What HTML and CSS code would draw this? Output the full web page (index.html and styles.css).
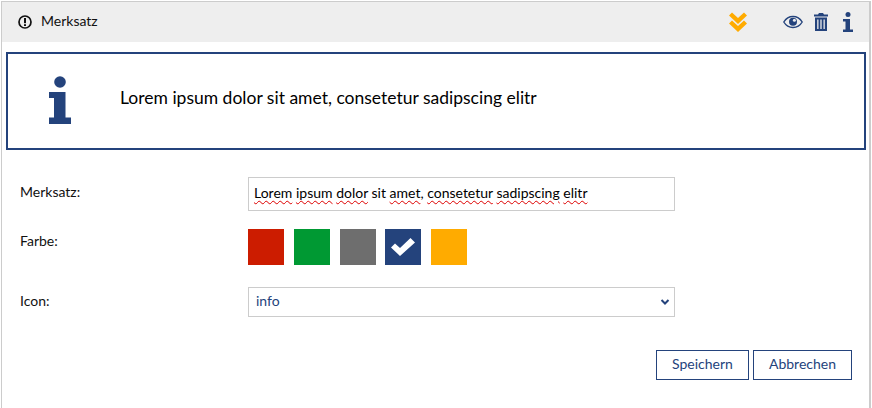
FILE: index.html
```html
<!DOCTYPE html>
<html lang="de">
<head>
<meta charset="utf-8">
<title>Merksatz</title>
<link rel="stylesheet" href="styles.css">
</head>
<body>
<div class="panel">
  <header class="head">
    <svg class="alert" viewBox="0 0 14 14" width="14" height="14"><circle cx="7" cy="7" r="6" fill="none" stroke="#111" stroke-width="1.700"/><rect x="6" y="3" width="2" height="5.200" fill="#111"/><rect x="6" y="9.200" width="2" height="1.800" fill="#111"/></svg>
    <span class="head-title">Merksatz</span>
    <svg class="chev" viewBox="0 0 18 20" width="18" height="20"><path d="M0 3.500 3 .5 9 6 15 .5 18 3.500 9 12Z M0 11.500 3 8.500 9 14 15 8.500 18 11.500 9 20Z" fill="#ffab00"/></svg>
    <svg class="eye" viewBox="0 0 20 14" width="20" height="14"><path d="M.8 7C3 3.300 6.200 1.500 10 1.500S17 3.300 19.200 7C17 10.700 13.800 12.500 10 12.500S3 10.700 .8 7Z" fill="none" stroke="#24437c" stroke-width="1.400"/><circle cx="10" cy="6.800" r="4" fill="#24437c"/><circle cx="11.400" cy="5.300" r="1.500" fill="#eee"/></svg>
    <svg class="trash" viewBox="0 0 14 18" width="14" height="18"><path d="M5 0h4l1 1.500h4V3.500H0V1.500h4Z" fill="#24437c"/><path d="M1 4.500h12V18H1Z M3.200 6.500v9.500h1.300V6.500Z M6.350 6.500v9.500h1.300V6.500Z M9.500 6.500v9.500h1.300V6.500Z" fill="#24437c" fill-rule="evenodd"/></svg>
    <svg class="info-small" viewBox="0 0 10 20" width="10" height="20"><circle cx="5" cy="2.500" r="2.500" fill="#24437c"/><path d="M0 7h7v10.500h3V20H0v-2.500h2.500V9.500H0Z" fill="#24437c"/></svg>
  </header>
  <section class="notice">
    <svg class="info-big" viewBox="0 0 22 49" width="22" height="49"><circle cx="11" cy="6" r="5.800" fill="#24437c"/><path d="M0 16h16.500v25.500H22V48H0v-6.500h5V22H0Z" fill="#24437c"/></svg>
    <p class="notice-text">Lorem ipsum dolor sit amet, consetetur sadipscing elitr</p>
  </section>
  <form class="form">
    <div class="row row-text">
      <span class="label">Merksatz:</span>
      <div class="field text-field"><span class="sp">Lorem</span> <span class="sp">ipsum</span> <span class="sp">dolor</span> sit <span class="sp">amet</span>, <span class="sp">consetetur</span> <span class="sp">sadipscing</span> <span class="sp">elitr</span></div>
    </div>
    <div class="row row-color">
      <span class="label">Farbe:</span>
      <div class="swatches">
        <span class="swatch red"></span>
        <span class="swatch green"></span>
        <span class="swatch gray"></span>
        <span class="swatch navy"><svg viewBox="0 0 24 18" width="24" height="18"><path d="M0 9.500 4 5.500 9 10 19.500 0 24 4.500 9 18Z" fill="#fff"/></svg></span>
        <span class="swatch amber"></span>
      </div>
    </div>
    <div class="row row-icon">
      <span class="label">Icon:</span>
      <div class="field select-field"><span>info</span><svg viewBox="0 0 10 7" width="10" height="7"><path d="M1.500 1 5 4.500 8.500 1" fill="none" stroke="#24437c" stroke-width="2"/></svg></div>
    </div>
    <div class="actions">
      <button type="button" class="btn btn-save">Speichern</button>
      <button type="button" class="btn btn-cancel">Abbrechen</button>
    </div>
  </form>
</div>
</body>
</html>
```
FILE: styles.css
```css
* { box-sizing: border-box; }
html, body { margin: 0; padding: 0; background: #fff; }
body {
  font-family: Lato, "Liberation Sans", sans-serif;
  font-size: 14px;
  color: #111;
  width: 872px;
  height: 408px;
  overflow: hidden;
  padding: 1px 0 0 1px;
}
.panel {
  width: 870px;
  height: 407px;
  border: 1px solid #ccc;
  border-width: 1px 2px 0 1px;
  background: #fff;
}
.head {
  height: 40px;
  background: #eee;
  display: flex;
  align-items: center;
  padding: 0 16px 0 16px;
}
.head-title { margin: 0 0 4px 9px; flex: 1; }
.chev { margin-right: 36px; }
.eye { margin-right: 11px; }
.trash { margin-right: 15px; }
.notice {
  margin: 10px 3px 0 4px;
  height: 98px;
  border: 2px solid #24437c;
  display: flex;
  align-items: center;
  padding: 0 0 0 41px;
}
.info-big { flex: none; margin-bottom: 1px; }
.notice-text {
  margin: 0 0 8px 49px;
  font-size: 17.5px;
  color: #000;
}
.form { padding: 27px 17px 0 18px; }
.row { display: flex; }
.label { width: 228px; flex: none; }
.row-text { height: 34px; }
.row-text .label { line-height: 30px; }
.row-color { margin-top: 18px; height: 37px; }
.row-color .label { padding-top: 3px; }
.row-icon { margin-top: 21px; height: 30px; }
.row-icon .label { line-height: 28px; }
.field {
  width: 427px;
  border: 1px solid #ccc;
  display: flex;
  align-items: center;
  white-space: pre;
}
.text-field {
  display: block;
  height: 34px;
  line-height: 30px;
  padding-left: 5px;
  color: #000;
}
.sp { text-decoration: underline wavy #d00 1px; text-underline-offset: 2px; }
.select-field {
  height: 30px;
  padding: 0 4px 3px 7px;
  color: #24437c;
  justify-content: space-between;
}
.select-field svg { margin-top: 3px; }
.swatches { display: flex; gap: 10px; }
.swatch {
  width: 36px;
  height: 36px;
  display: flex;
  align-items: center;
  justify-content: center;
}
.red { background: #cc1c00; }
.green { background: #009933; }
.gray { background: #6e6e6e; }
.navy { background: #24437c; margin-left: -1px; }
.amber { background: #ffab00; }
.actions {
  display: flex;
  justify-content: flex-end;
  gap: 4px;
  margin-top: 33px;
}
.btn {
  height: 30px;
  border: 1px solid #24437c;
  background: #fff;
  color: #24437c;
  font: inherit;
  padding: 0 0 3px;
}
.btn-save { width: 93px; }
.btn-cancel { width: 99px; }
```
